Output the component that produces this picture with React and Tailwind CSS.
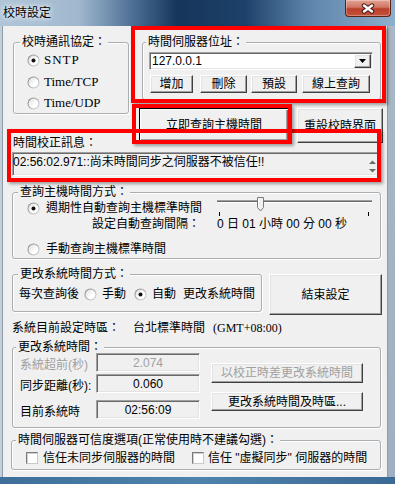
import React from 'react';

const F = "font-['Liberation_Sans','Noto_Sans_CJK_TC',sans-serif]";
const SERIF = "font-['Liberation_Serif','Noto_Sans_CJK_TC',serif]";

const raised =
  'flex items-center justify-center bg-[#f0f0f0] border border-t-white border-l-white border-r-[#404040] border-b-[#404040] shadow-[inset_-1px_-1px_0_#a0a0a0,inset_1px_1px_0_#e3e3e3] whitespace-nowrap';
const sunken =
  'border border-t-[#a0a0a0] border-l-[#a0a0a0] border-r-white border-b-white shadow-[inset_1px_1px_0_#696969,inset_-1px_-1px_0_#e3e3e3]';

function Group({ title, lx, className = '', children }) {
  return (
    <div className={`border border-[#a9aeb3] rounded-[3px] shadow-[inset_1px_1px_0_#fff,1px_1px_0_#fff] ${className}`}>
      <div className={`-mt-[8px] ${lx} px-[2px] w-fit h-[14px] leading-[14px] bg-[#f0f0f0] whitespace-nowrap`}>
        {title}
      </div>
      {children}
    </div>
  );
}

function Radio({ checked }) {
  return (
    <svg width="13" height="13" viewBox="0 0 13 13" className="shrink-0">
      <defs>
        <linearGradient id="rring" x1="0" y1="0" x2="1" y2="1">
          <stop offset="0" stopColor="#7d7d7d" />
          <stop offset="1" stopColor="#d9d9d9" />
        </linearGradient>
        <linearGradient id="rfill" x1="0" y1="0" x2="1" y2="1">
          <stop offset="0" stopColor="#dcdcdc" />
          <stop offset="0.6" stopColor="#ffffff" />
        </linearGradient>
      </defs>
      <circle cx="6.5" cy="6.5" r="6" fill="url(#rring)" />
      <circle cx="6.5" cy="6.5" r="5" fill="url(#rfill)" />
      {checked && <circle cx="6.5" cy="6.5" r="2" fill="#111" />}
    </svg>
  );
}

function Check() {
  return (
    <div className="w-[12px] h-[12px] shrink-0 bg-white border border-t-[#7a7a7a] border-l-[#7a7a7a] border-r-[#c8c8c8] border-b-[#c8c8c8] shadow-[inset_1px_1px_0_#d0d0d0]" />
  );
}

function CloseButton() {
  return (
    <div className="mr-[4px] w-[46px] h-[17px] rounded-b-[4px] border border-t-0 border-[#5b2218] bg-[linear-gradient(180deg,#e3a395_0%,#d27563_45%,#b8402c_55%,#c65239_100%)] shadow-[inset_0_0_0_1px_rgba(255,255,255,0.3)] flex items-center justify-center">
      <svg width="14" height="11" viewBox="0 0 14 11">
        <path d="M3 2.5 L11 8.5 M11 2.5 L3 8.5" stroke="#3a1510" strokeWidth="4.4" strokeLinecap="round" />
        <path d="M3 2.5 L11 8.5 M11 2.5 L3 8.5" stroke="#fff" strokeWidth="2.5" strokeLinecap="round" />
      </svg>
    </div>
  );
}

function Slider() {
  return (
    <svg width="157" height="20" viewBox="0 0 157 20" className="-mt-[2px] block">
      <rect x="1" y="3" width="155" height="1" fill="#a0a0a0" />
      <rect x="1" y="4" width="155" height="1" fill="#696969" />
      <rect x="1" y="5" width="155" height="1" fill="#ffffff" />
      <path d="M41.5 0.5 H47.5 V10.5 L44.5 14 L41.5 10.5 Z" fill="#f0f0f0" stroke="#7a7a7a" />
      <path d="M42.5 1.5 V10" stroke="#fff" />
      <rect x="3" y="15" width="1" height="4" fill="#000" />
      <rect x="152" y="15" width="1" height="4" fill="#000" />
    </svg>
  );
}

function RedBox({ className }) {
  return (
    <div className={`absolute border-[4px] border-[#ff0000] shadow-[2px_2px_3px_rgba(0,0,0,0.35)] ${className}`} />
  );
}

export default function App() {
  return (
    <div className={`relative w-[395px] h-[484px] overflow-hidden ${F} text-[12px] leading-[14px] text-black bg-[#a8b8c8] flex flex-col`}>
      {/* title bar */}
      <div className="h-[26px] shrink-0 flex items-start justify-between bg-[linear-gradient(90deg,#b0c5d8_0%,#a0b8ce_20%,#4b6d93_34%,#16355a_45%,#1d416a_62%,#5c84ab_78%,#8eaecc_100%)]">
        <span className="ml-[3px] mt-[6px] text-[12px] [text-shadow:0_0_4px_#fff,0_0_8px_#fff]">校時設定</span>
        <CloseButton />
      </div>

      <div className="flex h-[451px]">
        <div className="w-[3px] bg-[#c3d0dc] border-r border-[#8d9aa7]" />
        <div className="w-[385px] h-[451px] bg-[#f0f0f0] border-r border-[#8d9aa7]">
          {/* top section */}
          <div className="pt-[16px] flex">
            <div className="ml-[10px] w-[116px]">
              <Group title="校時通訊協定：" lx="ml-[6px]" className="h-[72px]">
                <div className="ml-[13px] flex flex-col">
                  <div className="mt-[4px] h-[14px] flex items-center">
                    <Radio checked />
                    <span className={`ml-[4px] ${SERIF} text-[13px] tracking-[1px]`}>SNTP</span>
                  </div>
                  <div className="mt-[8px] h-[14px] flex items-center">
                    <Radio />
                    <span className={`ml-[4px] ${SERIF} text-[13px]`}>Time/TCP</span>
                  </div>
                  <div className="mt-[7px] h-[14px] flex items-center">
                    <Radio />
                    <span className={`ml-[4px] ${SERIF} text-[13px]`}>Time/UDP</span>
                  </div>
                </div>
              </Group>
              <div className="mt-[22px] whitespace-nowrap">時間校正訊息：</div>
            </div>

            <div className="ml-[10px] w-[244px]">
              <Group title="時間伺服器位址：" lx="ml-[3px]" className="ml-[3px] w-[239px] h-[58px]">
                <div className={`mt-[3px] ml-[6px] w-[224px] h-[18px] bg-white flex items-stretch p-[1px] ${sunken}`}>
                  <span className="flex-1 pl-[1px] leading-[14px]">127.0.0.1</span>
                  <div className={`w-[17px] ${raised}`}>
                    <svg width="7" height="4" viewBox="0 0 7 4">
                      <path d="M0 0 H7 L3.5 4 Z" fill="#000" />
                    </svg>
                  </div>
                </div>
                <div className="mt-[5px] ml-[7px] flex h-[18px]">
                  <div className={`w-[43px] ${raised}`}>增加</div>
                  <div className={`ml-[7px] w-[47px] ${raised}`}>刪除</div>
                  <div className={`ml-[4px] w-[46px] ${raised}`}>預設</div>
                  <div className={`ml-[5px] w-[68px] ${raised}`}>線上查詢</div>
                </div>
              </Group>
              <div className="mt-[8px] flex items-start">
                <div className="w-[150px] h-[34px] flex items-center justify-center bg-[#f0f0f0] border border-black shadow-[inset_1px_1px_0_#fff,inset_-1px_-1px_0_#696969,inset_-2px_-2px_0_#a0a0a0]">
                  立即查詢主機時間
                </div>
                <div className={`ml-[8px] w-[86px] h-[35px] ${raised}`}>重設校時界面</div>
              </div>
            </div>
          </div>

          {/* message box */}
          <div className={`mt-[2px] ml-[9px] w-[367px] h-[24px] bg-[#f0f0f0] flex ${sunken}`}>
            <span className="flex-1 mt-[2px] whitespace-nowrap">02:56:02.971::尚未時間同步之伺服器不被信任!!</span>
            <svg width="9" height="22" viewBox="0 0 9 22" className="mr-[1px]">
              <path d="M1 11 L4.5 7.5 L8 11 Z" fill="#6a6a6a" />
              <path d="M1 16 L4.5 19.5 L8 16 Z" fill="#6a6a6a" />
            </svg>
          </div>

          {/* query method */}
          <Group title="查詢主機時間方式：" lx="ml-[5px]" className="mt-[16px] ml-[9px] w-[369px] h-[67px]">
            <div className="flex">
              <div className="w-[203px]">
                <div className="mt-[2px] h-[14px] pl-[14px] flex items-center">
                  <Radio checked />
                  <span className="ml-[6px] whitespace-nowrap">週期性自動查詢主機標準時間</span>
                </div>
                <div className="mt-[2px] h-[14px] pr-[16px] text-right whitespace-nowrap">設定自動查詢間隔：</div>
                <div className="mt-[11px] h-[14px] pl-[14px] flex items-center">
                  <Radio />
                  <span className="ml-[6px] whitespace-nowrap">手動查詢主機標準時間</span>
                </div>
              </div>
              <div className="w-[157px]">
                <Slider />
                <div className="h-[14px] pl-[1px] whitespace-nowrap">0 日 01 小時 00 分 00 秒</div>
              </div>
            </div>
          </Group>

          {/* change method + finish */}
          <div className="mt-[15px] ml-[9px] flex items-start">
            <Group title="更改系統時間方式：" lx="ml-[5px]" className="w-[250px] h-[38px]">
              <div className="mt-[6px] h-[14px] pl-[6px] flex items-center whitespace-nowrap">
                <span>每次查詢後</span>
                <span className="ml-[5px]"><Radio /></span>
                <span className="ml-[5px]">手動</span>
                <span className="ml-[8px]"><Radio checked /></span>
                <span className="ml-[5px]">自動</span>
                <span className="ml-[7px]">更改系統時間</span>
              </div>
            </Group>
            <div className={`ml-[7px] w-[113px] h-[41px] ${raised}`}>結束設定</div>
          </div>

          {/* timezone */}
          <div className="mt-[6px] ml-[9px] h-[14px] flex whitespace-nowrap">
            <span>系統目前設定時區：</span>
            <span className="ml-[13px]">台北標準時間</span>
            <span className={`ml-[8px] ${SERIF}`}>(GMT+08:00)</span>
          </div>

          {/* change system time */}
          <Group title="更改系統時間：" lx="ml-[3px]" className="mt-[12px] ml-[9px] w-[369px] h-[81px]">
            <div className="flex items-start">
              <div className="ml-[7px] -mt-[1px]">
                <div className="flex items-center h-[19px]">
                  <span className="w-[76px] mt-[4px] text-[#a0a0a0] whitespace-nowrap">系統超前(秒)</span>
                  <div className={`w-[104px] h-[19px] flex items-center justify-center text-[#a0a0a0] bg-[#f0f0f0] ${sunken}`}>2.074</div>
                </div>
                <div className="mt-[2px] flex items-center h-[19px]">
                  <span className="w-[76px] mt-[4px] whitespace-nowrap">同步距離(秒):</span>
                  <div className={`w-[104px] h-[19px] flex items-center justify-center bg-[#f0f0f0] ${sunken}`}>0.060</div>
                </div>
                <div className="mt-[7px] flex items-center h-[19px]">
                  <span className="w-[76px] mt-[4px] whitespace-nowrap">目前系統時</span>
                  <div className={`w-[104px] h-[19px] flex items-center justify-center bg-[#f0f0f0] ${sunken}`}>02:56:09</div>
                </div>
              </div>
              <div className="ml-[11px] mt-[9px]">
                <div className={`w-[152px] h-[20px] text-[#a0a0a0] ${raised}`}>以校正時差更改系統時間</div>
                <div className={`mt-[9px] w-[152px] h-[19px] ${raised}`}>更改系統時間及時區...</div>
              </div>
            </div>
          </Group>

          {/* trust options */}
          <Group title="時間伺服器可信度選項(正常使用時不建議勾選)：" lx="ml-[4px]" className="mt-[12px] ml-[8px] w-[370px] h-[30px]">
            <div className="mt-[5px] h-[12px] pl-[14px] flex items-center whitespace-nowrap">
              <Check />
              <span className="ml-[5px]">信任未同步伺服器的時間</span>
              <span className="ml-[17px]"><Check /></span>
              <span className="ml-[4px]">信任 "虛擬同步" 伺服器的時間</span>
            </div>
          </Group>
        </div>
        <div className="w-[7px] bg-[linear-gradient(180deg,#a9b7c6,#9fb0c2)]" />
      </div>

      <div className="h-[7px] bg-[linear-gradient(90deg,#3d6f9a,#4f83ad,#3a6a94)]" />

      {/* annotation boxes */}
      <RedBox className="left-[131px] top-[26px] w-[255px] h-[77px]" />
      <RedBox className="left-[7px] top-[129px] w-[374px] h-[53px]" />
      <RedBox className="left-[132px] top-[104px] w-[160px] h-[40px]" />
    </div>
  );
}
